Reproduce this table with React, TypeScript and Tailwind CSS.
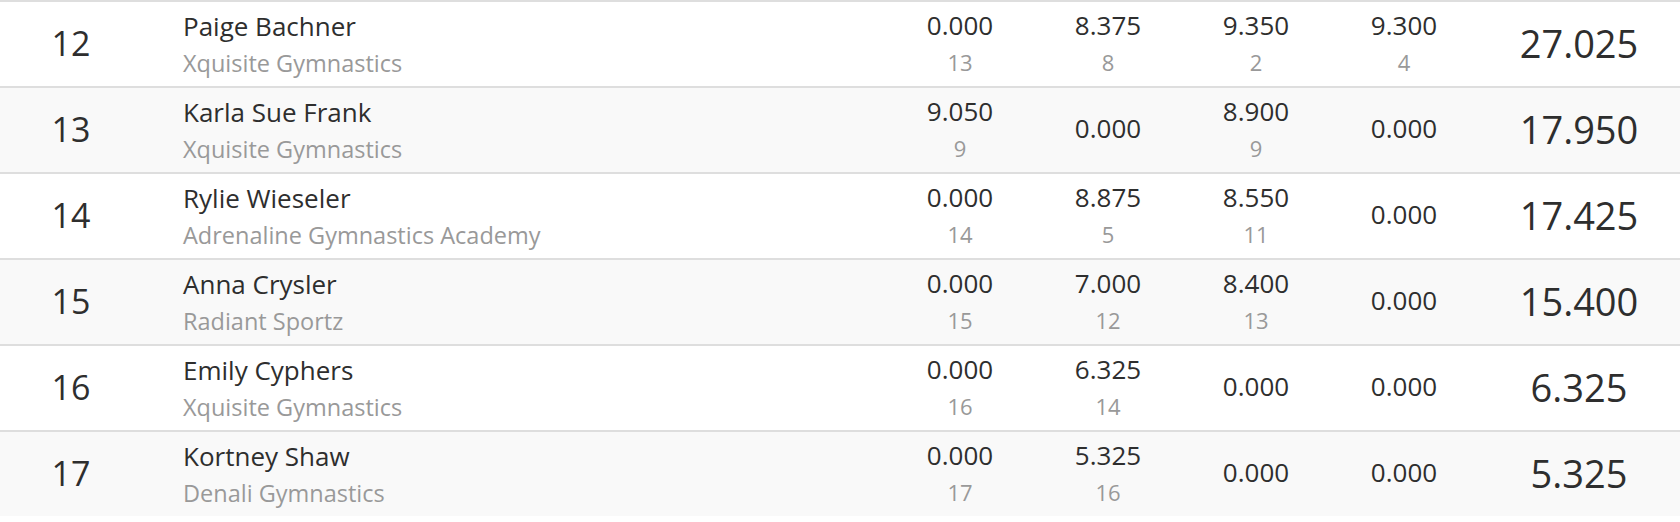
import React from "react";

type Score = { v: string; r?: string };
type Row = { rank: string; name: string; team: string; scores: Score[]; total: string };

const rows: Row[] = [
  { rank: "12", name: "Paige Bachner", team: "Xquisite Gymnastics", scores: [{ v: "0.000", r: "13" }, { v: "8.375", r: "8" }, { v: "9.350", r: "2" }, { v: "9.300", r: "4" }], total: "27.025" },
  { rank: "13", name: "Karla Sue Frank", team: "Xquisite Gymnastics", scores: [{ v: "9.050", r: "9" }, { v: "0.000" }, { v: "8.900", r: "9" }, { v: "0.000" }], total: "17.950" },
  { rank: "14", name: "Rylie Wieseler", team: "Adrenaline Gymnastics Academy", scores: [{ v: "0.000", r: "14" }, { v: "8.875", r: "5" }, { v: "8.550", r: "11" }, { v: "0.000" }], total: "17.425" },
  { rank: "15", name: "Anna Crysler", team: "Radiant Sportz", scores: [{ v: "0.000", r: "15" }, { v: "7.000", r: "12" }, { v: "8.400", r: "13" }, { v: "0.000" }], total: "15.400" },
  { rank: "16", name: "Emily Cyphers", team: "Xquisite Gymnastics", scores: [{ v: "0.000", r: "16" }, { v: "6.325", r: "14" }, { v: "0.000" }, { v: "0.000" }], total: "6.325" },
  { rank: "17", name: "Kortney Shaw", team: "Denali Gymnastics", scores: [{ v: "0.000", r: "17" }, { v: "5.325", r: "16" }, { v: "0.000" }, { v: "0.000" }], total: "5.325" },
];

export default function App() {
  return (
    <div className="w-[1680px] bg-white text-[#2e2e2e]" style={{ fontFamily: '"Open Sans", "Noto Sans", sans-serif' }}>
      {rows.map((row, i) => (
        <div
          key={row.rank}
          className={`grid grid-cols-[142px_744px_148px_148px_148px_148px_202px] h-[86px] border-t-2 border-[#dedede] ${i % 2 === 1 ? "bg-[#f9f9f9]" : "bg-white"}`}
        >
          <div className="flex items-center justify-center pb-[2px] text-[34px]">{row.rank}</div>
          <div className="flex flex-col justify-center pl-[41px] pt-[2px]">
            <div className="text-[26px] leading-[37px] text-[#2e2e2e]">{row.name}</div>
            <div className="text-[23.5px] leading-[37px] text-[#999]">{row.team}</div>
          </div>
          {row.scores.map((s, j) => (
            <div key={j} className={`flex flex-col items-center justify-center ${s.r ? "" : "pb-[3px]"}`}>
              <div className="text-[26px] leading-[37px] text-[#2e2e2e]">{s.v}</div>
              {s.r && <div className="text-[22px] leading-[37px] text-[#999]">{s.r}</div>}
            </div>
          ))}
          <div className="flex items-center justify-center pb-[2px] text-[38px]">{row.total}</div>
        </div>
      ))}
    </div>
  );
}
